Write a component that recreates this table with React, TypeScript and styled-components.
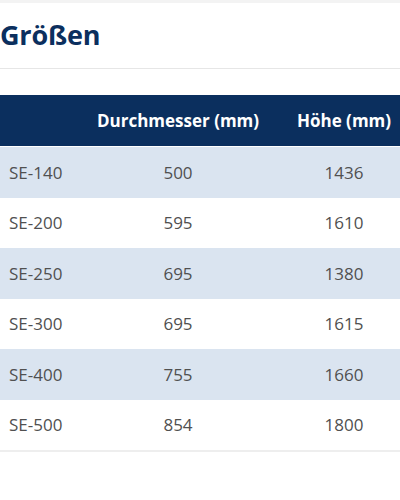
import styled, { createGlobalStyle } from "styled-components";

const GlobalStyle = createGlobalStyle`
  html, body {
    margin: 0;
    padding: 0;
    background: #ffffff;
    font-family: "Open Sans", "Liberation Sans", sans-serif;
  }
`;

const SIZES = [
  { model: "SE-140", diameter: 500, height: 1436 },
  { model: "SE-200", diameter: 595, height: 1610 },
  { model: "SE-250", diameter: 695, height: 1380 },
  { model: "SE-300", diameter: 695, height: 1615 },
  { model: "SE-400", diameter: 755, height: 1660 },
  { model: "SE-500", diameter: 854, height: 1800 },
];

export default function App() {
  return (
    <>
      <GlobalStyle />
      <Page>
        <TopBar />
        <TitleBar>
          <Title>Größen</Title>
        </TitleBar>
        <Table>
          <HeadRow>
            <HeadCell />
            <HeadCell>Durchmesser (mm)</HeadCell>
            <HeadCell>Höhe (mm)</HeadCell>
          </HeadRow>
          {SIZES.map((row, i) => (
            <Row key={row.model} $striped={i % 2 === 0}>
              <Cell $left>{row.model}</Cell>
              <Cell>{row.diameter}</Cell>
              <Cell>{row.height}</Cell>
            </Row>
          ))}
        </Table>
      </Page>
    </>
  );
}

const Page = styled.div`
  width: 400px;
  height: 500px;
  overflow: hidden;
`;

const TopBar = styled.div`
  height: 3px;
  background: #f3f3f3;
`;

const TitleBar = styled.div`
  height: 65px;
  display: flex;
  align-items: center;
  border-bottom: 1px solid #e6e6e6;
`;

const Title = styled.h2`
  margin: 0;
  padding-bottom: 2px;
  color: #0b2f5e;
  font-size: 27px;
  font-weight: 700;
  letter-spacing: -0.2px;
`;

const Table = styled.div`
  margin-top: 26px;
  display: flex;
  flex-direction: column;
  border-bottom: 2px solid #eeeeee;
`;

const HeadRow = styled.div`
  display: grid;
  grid-template-columns: 68px 220px 112px;
  height: 51px;
  background: #0b2f5e;
  margin-bottom: 1px;
`;

const HeadCell = styled.div`
  display: flex;
  align-items: center;
  justify-content: center;
  color: #ffffff;
  font-size: 17px;
  font-weight: 700;
  white-space: nowrap;
`;

const Row = styled.div<{ $striped: boolean }>`
  display: grid;
  grid-template-columns: 68px 220px 112px;
  height: 50.5px;
  background: ${(p) => (p.$striped ? "#dae4f0" : "#ffffff")};
`;

const Cell = styled.div<{ $left?: boolean }>`
  display: flex;
  align-items: center;
  justify-content: ${(p) => (p.$left ? "flex-start" : "center")};
  padding-left: ${(p) => (p.$left ? "9px" : "0")};
  color: #505050;
  font-size: 17px;
  white-space: nowrap;
`;
